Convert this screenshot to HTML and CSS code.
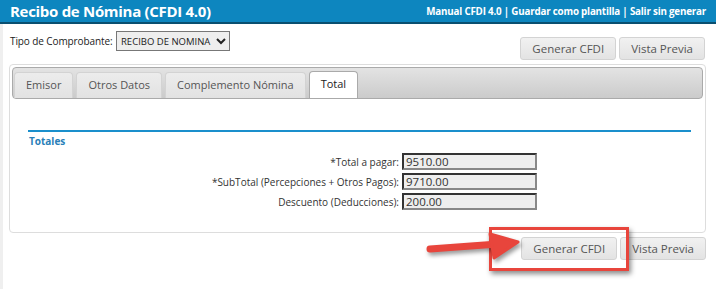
FILE: index.html
```html
<!DOCTYPE html>
<html lang="es">
<head>
  <meta charset="UTF-8" />
  <title>Recibo de Nómina (CFDI 4.0)</title>
  <link rel="stylesheet" href="styles.css">
</head>
<body>

  <div class="topbar">
    <h1>Recibo de Nómina (CFDI 4.0)</h1>
    <div class="links">
      <a href="#">Manual CFDI 4.0</a> | <a href="#">Guardar como plantilla</a> | <a href="#">Salir sin generar</a>
    </div>
  </div>

  <div class="page">
    <div class="toolbar">
      <label class="tipo">Tipo de Comprobante:
        <select>
          <option>RECIBO DE NOMINA</option>
        </select>
      </label>
      <div class="actions">
        <button class="btn">Generar CFDI</button>
        <button class="btn">Vista Previa</button>
      </div>
    </div>

    <div class="tabs">
      <ul class="tab-nav">
        <li>Emisor</li>
        <li>Otros Datos</li>
        <li>Complemento Nómina</li>
        <li class="active">Total</li>
      </ul>
      <div class="tab-body">
        <fieldset class="totales">
          <legend>Totales</legend>
          <div class="form-grid">
            <label>*Total a pagar:</label>
            <input type="text" value="9510.00" readonly>
            <label>*SubTotal (Percepciones + Otros Pagos):</label>
            <input type="text" value="9710.00" readonly>
            <label>Descuento (Deducciones):</label>
            <input type="text" value="200.00" readonly>
          </div>
        </fieldset>
      </div>
    </div>

    <div class="actions bottom">
      <button class="btn">Generar CFDI</button>
      <button class="btn">Vista Previa</button>
    </div>
  </div>

  <!-- anotacion del tutorial -->
  <div class="callout"></div>
  <svg class="arrow" width="100" height="30" viewBox="0 0 100 30">
    <line x1="4" y1="17" x2="72" y2="12" stroke="#e8453c" stroke-width="7" stroke-linecap="round"/>
    <polygon points="64,2 92,10 68,26" fill="#e8453c" stroke="#e8453c" stroke-width="3" stroke-linejoin="round"/>
  </svg>

</body>
</html>
```

FILE: styles.css
```css
body {
  margin: 0;
  font-family: "Open Sans", "Noto Sans", sans-serif;
  font-size: 11px;
  color: #222;
  background: #fff;
}
.topbar {
  display: flex;
  justify-content: space-between;
  align-items: center;
  height: 22px;
  padding: 0 10px;
  background: #0d86bf;
  border-bottom: 2px solid #0a4f70;
  color: #fff;
}
.topbar h1 {
  margin: 0;
  font-size: 15px;
  font-weight: bold;
  letter-spacing: -0.3px;
}
.links {
  font-size: 9.8px;
  font-weight: bold;
  letter-spacing: -0.2px;
}
.links a {
  color: #fff;
  text-decoration: none;
}
.page {
  border-left: 3px solid #efefef;
  padding: 7px 10px 30px 6px;
}
.toolbar {
  display: flex;
  justify-content: space-between;
  align-items: flex-start;
}
.tipo {
  font-size: 10px;
  letter-spacing: -0.1px;
  padding-left: 1px;
}
.tipo select {
  font-family: inherit;
  font-size: 9.5px;
  height: 20px;
  width: 114px;
  margin-left: 1px;
  padding: 0;
  border: 1px solid #777;
  background: #eee;
  color: #222;
}
.actions {
  display: flex;
  gap: 3px;
  margin-top: 6px;
  margin-right: 1px;
}
.btn {
  font-family: inherit;
  font-size: 11.5px;
  color: #555;
  height: 23px;
  padding: 0 11px;
  background: linear-gradient(#f1f1f1, #e3e3e3);
  border: 1px solid #d3d3d3;
  border-radius: 3px;
}
.tabs {
  margin-top: 4px;
  border: 1px solid #ddd;
  border-radius: 4px;
  padding: 2px;
}
.tab-nav {
  display: flex;
  gap: 3px;
  list-style: none;
  margin: 0;
  padding: 3px 0 0 1px;
  height: 27px;
  background: linear-gradient(#e3e3e3, #cbcbcb);
  border: 1px solid #aaa;
  border-radius: 4px;
}
.tab-nav li {
  align-self: flex-end;
  height: 25px;
  line-height: 24px;
  padding: 0 11px;
  font-size: 11px;
  color: #555;
  background: linear-gradient(#ececec, #e2e2e2);
  border: 1px solid #d3d3d3;
  border-bottom: 0;
  border-radius: 4px 4px 0 0;
}
.tab-nav li.active {
  color: #222;
  background: #fff;
  border-color: #aaa;
  height: 26px;
}
.tab-body {
  padding: 31px 12px 20px 16px;
}
.totales {
  margin: 0;
  padding: 0;
  border: 0;
  border-top: 2px solid #1a8fcc;
}
.totales legend {
  display: block;
  float: left;
  width: 100%;
  padding: 2px 1px 0;
  font-size: 10px;
  font-weight: bold;
  color: #2a7fb8;
}
.form-grid {
  clear: both;
  display: grid;
  grid-template-columns: 371px 135px;
  column-gap: 3px;
  row-gap: 3px;
  align-items: center;
  padding-top: 5px;
}
.form-grid label {
  text-align: right;
  font-size: 10px;
  color: #333;
}
.form-grid input {
  font-family: inherit;
  font-size: 11.5px;
  height: 17px;
  box-sizing: border-box;
  padding: 0 2px;
  background: #eee;
  color: #333;
  border: 2px solid;
  border-color: #333 #888 #888 #333;
}
.bottom {
  justify-content: flex-end;
  margin-top: 4px;
  margin-right: 0;
}
.callout {
  position: absolute;
  left: 489px;
  top: 227px;
  width: 134px;
  height: 38px;
  border: 3px solid #e8453c;
  box-shadow: 2px 3px 5px rgba(0, 0, 0, 0.45);
}
.arrow {
  position: absolute;
  left: 426px;
  top: 232px;
  filter: drop-shadow(2px 3px 2px rgba(0, 0, 0, 0.4));
}
```
